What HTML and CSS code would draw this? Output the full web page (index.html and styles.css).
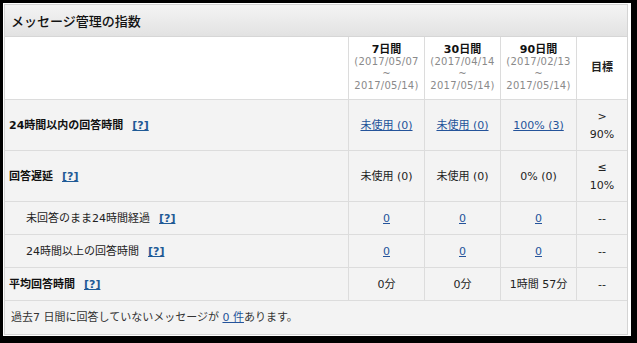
FILE: index.html
```html
<!DOCTYPE html>
<html lang="ja">
<head>
<meta charset="utf-8">
<title>メッセージ管理の指数</title>
<link rel="stylesheet" href="styles.css">
</head>
<body>
<div class="frame">
  <section class="panel">
    <h2 class="panel-title">メッセージ管理の指数</h2>
    <table class="metrics">
      <thead>
        <tr>
          <th class="c-label"></th>
          <th class="c-period"><span class="period">7日間</span><span class="range">(2017/05/07<br>~<br>2017/05/14)</span></th>
          <th class="c-period"><span class="period">30日間</span><span class="range">(2017/04/14<br>~<br>2017/05/14)</span></th>
          <th class="c-period"><span class="period">90日間</span><span class="range">(2017/02/13<br>~<br>2017/05/14)</span></th>
          <th class="c-goal">目標</th>
        </tr>
      </thead>
      <tbody>
        <tr class="tall">
          <th class="metric main">24時間以内の回答時間<a class="help" href="#">[?]</a></th>
          <td><a href="#">未使用 (0)</a></td>
          <td><a href="#">未使用 (0)</a></td>
          <td><a href="#">100% (3)</a></td>
          <td class="goal">&gt;<br>90%</td>
        </tr>
        <tr class="tall">
          <th class="metric main">回答遅延<a class="help" href="#">[?]</a></th>
          <td>未使用 (0)</td>
          <td>未使用 (0)</td>
          <td>0% (0)</td>
          <td class="goal">≤<br>10%</td>
        </tr>
        <tr>
          <th class="metric sub">未回答のまま24時間経過<a class="help" href="#">[?]</a></th>
          <td><a href="#">0</a></td>
          <td><a href="#">0</a></td>
          <td><a href="#">0</a></td>
          <td class="goal">--</td>
        </tr>
        <tr>
          <th class="metric sub">24時間以上の回答時間<a class="help" href="#">[?]</a></th>
          <td><a href="#">0</a></td>
          <td><a href="#">0</a></td>
          <td><a href="#">0</a></td>
          <td class="goal">--</td>
        </tr>
        <tr>
          <th class="metric main">平均回答時間<a class="help" href="#">[?]</a></th>
          <td>0分</td>
          <td>0分</td>
          <td>1時間 57分</td>
          <td class="goal">--</td>
        </tr>
      </tbody>
    </table>
    <p class="panel-foot">過去7 日間に回答していないメッセージが <a href="#">0 件</a>あります。</p>
  </section>
</div>
</body>
</html>
```
FILE: styles.css
```css
* {
  box-sizing: border-box;
}

html, body {
  margin: 0;
  background: #000;
}

body {
  font-family: "DejaVu Sans", "Noto Sans CJK JP", sans-serif;
  font-size: 11px;
  color: #222;
}

.frame {
  margin: 3px 0 0 3px;
  width: 628px;
  height: 333px;
  padding: 1px 3px 1px 1px;
  background: #fff;
}

.panel {
  width: 624px;
  height: 331px;
  border: 1px solid #d4d4d4;
  background: #f3f3f3;
}

.panel-title {
  margin: 0;
  height: 32px;
  padding-left: 6px;
  line-height: 31px;
  font-family: "Noto Sans CJK JP", sans-serif;
  font-size: 13px;
  font-weight: 500;
  color: #111;
  background: linear-gradient(#f4f4f4, #e2e2e2);
  border-bottom: 1px solid #d6d6d6;
}

.metrics {
  width: 622px;
  table-layout: fixed;
  border-collapse: separate;
  border-spacing: 0;
}

.metrics th,
.metrics td {
  border-bottom: 1px solid #dcdcdc;
  vertical-align: middle;
}

.metrics thead th {
  background: #fff;
  padding: 7px 2px;
  line-height: 12px;
  text-align: center;
  font-weight: bold;
}

.c-label {
  width: 343px;
}

.c-period {
  width: 76px;
  border-left: 1px solid #dcdcdc;
}

.c-goal {
  width: 51px;
  border-left: 1px solid #dcdcdc;
}

.period {
  display: block;
  color: #111;
}

.range {
  display: block;
  font-size: 10px;
  letter-spacing: 0.25px;
  font-weight: normal;
  color: #8a8a8a;
}

.metrics tbody th,
.metrics tbody td {
  padding: 8px 4px 7px;
  line-height: 17px;
  background: #f3f3f3;
}

.metrics tbody td {
  text-align: center;
  border-left: 1px solid #dcdcdc;
  color: #222;
}

.metrics tbody .tall .goal {
  line-height: 17.5px;
}

.metric {
  text-align: left;
  padding-left: 7px;
}

.metric.main {
  font-weight: bold;
  color: #111;
}

.metric.sub {
  font-weight: normal;
  padding-left: 21px;
}

a {
  color: #24539a;
  text-decoration: underline;
}

.help {
  margin-left: 9px;
  font-weight: bold;
  color: #1f5a96;
}

.goal {
  color: #333;
}

.panel-foot {
  margin: 0;
  padding: 8px 6px;
  line-height: 17px;
  color: #333;
}
```
